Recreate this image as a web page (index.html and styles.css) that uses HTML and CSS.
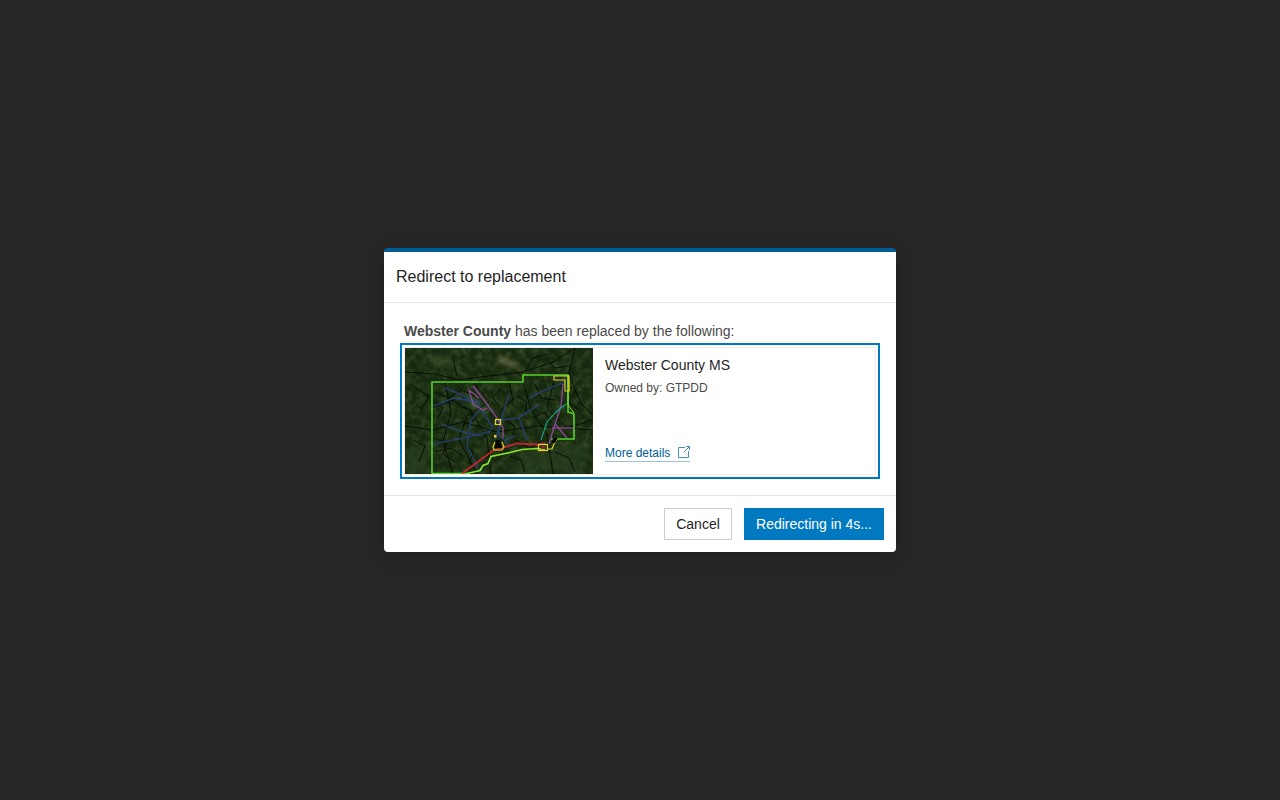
FILE: index.html
```html
<!DOCTYPE html>
<html lang="en">
<head>
  <meta charset="UTF-8">
  <title>Redirect to replacement</title>
  <link rel="stylesheet" href="styles.css">
</head>
<body>
<div class="modal">
  <div class="modal-header">Redirect to replacement</div>

  <div class="modal-body">
    <p class="replaced-text"><strong>Webster County</strong> has been replaced by the following:</p>
    <div class="item-outline">
      <div class="item-card">
        <svg class="item-thumb" viewBox="0 0 188 126" width="188" height="126" role="img" aria-label="Webster County MS map">
          <defs>
            <filter id="terrain" x="0" y="0" width="100%" height="100%" color-interpolation-filters="sRGB">
              <feTurbulence type="fractalNoise" baseFrequency="0.14" numOctaves="4" seed="7"/>
              <feColorMatrix values="0 0 0 0 0.24  0 0 0 0 0.32  0 0 0 0 0.17  1.6 0 0 0 -0.62"/>
            </filter>
            <filter id="soften" x="-5%" y="-5%" width="110%" height="110%" color-interpolation-filters="sRGB">
              <feGaussianBlur stdDeviation="0.4"/>
            </filter>
            <filter id="blur-patch" x="-30%" y="-30%" width="160%" height="160%" color-interpolation-filters="sRGB">
              <feGaussianBlur stdDeviation="2.5"/>
            </filter>
          </defs>
          <rect width="188" height="126" fill="#17290f"/>
          <rect width="188" height="126" filter="url(#terrain)"/>
          <g filter="url(#blur-patch)">
            <path d="M95 8l14 6 12 9-16-5-14-4z" fill="#7a7a52" opacity=".7"/>
            <path d="M20 8l24 2 10 8-26-2z" fill="#4a5c32" opacity=".6"/>
            <path d="M60 42l16 14 8 14-20-14z" fill="#3f6a3c" opacity=".7"/>
            <path d="M0 100l22-4v30H0z" fill="#2a3f20" opacity=".7"/>
            <path d="M120 100l60-6v30h-70z" fill="#2a3f20" opacity=".6"/>
          </g>

          <g filter="url(#soften)">
            <!-- county roads -->
            <g fill="none" stroke="#060a05" stroke-width=".9">
              <path d="M0 24l30 2 24 6 30-4 34-4 30-10 22-14"/>
              <path d="M26 60l22-8 20 14 14 24 4 36"/>
              <path d="M118 34l8 28 16 24 6 40"/>
              <path d="M0 78l28 4 30-8 34 10 40-6 56 4"/>
              <path d="M40 34l6 30-8 30 10 32"/>
              <path d="M150 30l-8 30 20 20 26-8"/>
              <path d="M170 0l-6 26 12 30 12 10"/>
              <path d="M68 34l16 20-22 14-8 24 18 34"/>
              <path d="M30 44l14 6 12-8 14 6M104 34l4 18-12 10M130 36l6 14 14 2M30 104l16-4 12 8M110 92l14 8 12-6"/>
              <path d="M52 28l-4-18M120 24l8-14 14-4"/>
              <path d="M28 52l10 8-6 12M56 58l10 4 2 12M96 40l-8 10 6 8M112 48l10 6-2 12M128 70l12-6 6 10"/>
              <path d="M30 90l12 6-4 10 12 8M60 96l8 8-4 12M100 72l10 6-2 10M104 108l12 4 4 12M150 104l14 6 6 14"/>
              <path d="M172 40l-8 14 10 8M10 40l14 8-8 14M8 92l12 6-6 16M140 10l10 10 14-2"/>
            </g>

            <!-- streams -->
            <g fill="none" stroke="#2a4488" stroke-width="1.500" opacity=".72">
              <path d="M29 58l20-8 22 4 16 24"/>
              <path d="M52 50l24 4"/>
              <path d="M74 62l-8 10-4 26 12 24"/>
              <path d="M28 96l30-6 26-6 8-12"/>
              <path d="M104 46l-6 20-8 26"/>
              <path d="M135 56l-22 14-16 2-4 14 12 12"/>
              <path d="M36 76l22 8 18 4"/>
              <path d="M160 34l-20 8-16 8"/>
              <path d="M114 70l8 22"/>
              <path d="M40 40l24 10"/>
              <path d="M100 92l10-4"/>
            </g>

            <!-- county boundary -->
            <path d="M62 125.500H27V34h91v-7h45v37l6 2v25h-24" fill="none" stroke="#55cf2a" stroke-width="1.600"/>
            <path d="M62 125.500l13-3 3-5 5-2 3-7 19-4 12-3 15-1 8 1" fill="none" stroke="#86e62e" stroke-width="1.700"/>
            <path d="M163 27v30l6 8" fill="none" stroke="#86e62e" stroke-width="1"/>

            <!-- pipeline routes -->
            <g fill="none" stroke="#8f4a96" stroke-width="1.300">
              <path d="M68 38l14 18 10 14 6 10v10"/>
              <path d="M74 50l-10-8 4 14 10 6 4-2"/>
              <path d="M158 36l-2 22-6 18-6 20"/>
              <path d="M147 80h22"/>
              <path d="M150 76l12 14"/>
            </g>
            <path d="M136 92l6-18 9-10 10-8" fill="none" stroke="#12a886" stroke-width="1.100"/>
            <path d="M57 125.500l15-11 16-12 24-7 20 1 8-1" fill="none" stroke="#c0272e" stroke-width="1.800"/>

            <!-- towns -->
            <g fill="none" stroke="#e6d22a" stroke-width="1.200">
              <path d="M149 28h15v15h-4v-11h-11z"/>
              <rect x="90.500" y="71.500" width="5" height="5"/>
              <path d="M90 94l-2 5 1 3h8l2-3-2-5"/>
              <rect x="133.500" y="96.500" width="9" height="6"/>
              <path d="M143 101h4l2-5 4-6"/>
            </g>
            <path d="M91 92h4l2 8h-7z" fill="#050505"/>
            <path d="M148 90h5l-3 5h-3z" fill="#050505"/>
            <rect x="136" y="98" width="4" height="3" fill="#8a1f2a"/>
            <rect x="89" y="87" width="2.500" height="2.500" fill="#e6d22a"/>
          </g>
        </svg>

        <div class="item-info">
          <div class="item-title">Webster County MS</div>
          <div class="item-owner">Owned by: GTPDD</div>
          <a class="item-link" href="#">
            More details
            <svg class="link-icon" viewBox="0 0 12 12" width="12" height="12" aria-hidden="true">
              <path d="M7 1.500H.5v10h10V5M6 6l5.500-5.500M8 .5h3.500V4" fill="none" stroke="#4d8fb8" stroke-width="1"/>
            </svg>
          </a>
        </div>
      </div>
    </div>
  </div>

  <div class="modal-footer">
    <button class="btn btn-cancel">Cancel</button>
    <button class="btn btn-primary">Redirecting in 4s...</button>
  </div>
</div>
</body>
</html>
```

FILE: styles.css
```css
* {
  box-sizing: border-box;
  margin: 0;
  padding: 0;
}

body {
  font-family: "Liberation Sans", Arial, sans-serif;
  background: #262626;
  color: #1f1f1f;
  height: 800px;
  display: flex;
  align-items: center;
  justify-content: center;
  overflow: hidden;
}

.modal {
  width: 512px;
  height: 304px;
  background: #fff;
  border-top: 4px solid #005e95;
  border-radius: 4px;
  box-shadow: 0 4px 16px rgba(0, 0, 0, 0.2);
  display: flex;
  flex-direction: column;
}

.modal-header {
  height: 51px;
  padding: 0 12px;
  display: flex;
  align-items: center;
  font-size: 16px;
  border-bottom: 1px solid #e8e8e8;
}

.modal-body {
  height: 193px;
  padding: 20px 16px 0;
}

.replaced-text {
  font-size: 14px;
  line-height: 16px;
  padding-left: 4px;
  margin-bottom: 4px;
  color: #4a4a4a;
}

.item-outline {
  border: 2px solid #0079c1;
  padding: 2px;
  height: 136px;
}

.item-card {
  display: flex;
  height: 128px;
  border: 1px solid #eeeeee;
}

.item-thumb {
  display: block;
  flex-shrink: 0;
}

.item-info {
  flex: 1;
  padding: 9px 12px 12px;
  display: flex;
  flex-direction: column;
  align-items: flex-start;
}

.item-title {
  font-size: 14px;
  line-height: 16px;
  margin-bottom: 8px;
}

.item-owner {
  font-size: 12px;
  line-height: 14px;
  color: #4a4a4a;
}

.item-link {
  margin-top: auto;
  font-size: 12px;
  line-height: 14px;
  color: #005e95;
  text-decoration: none;
  display: flex;
  align-items: flex-start;
  gap: 8px;
  height: 17px;
  padding-top: 1px;
  border-bottom: 1px solid #9cc3da;
}

.link-icon {
  margin-top: 0;
}

.modal-footer {
  flex: 1;
  border-top: 1px solid #e8e8e8;
  padding: 12px;
  display: flex;
  justify-content: flex-end;
  gap: 12px;
}

.btn {
  height: 32px;
  font-family: inherit;
  font-size: 14px;
  cursor: pointer;
}

.btn-cancel {
  width: 68px;
  background: #fff;
  color: #1f1f1f;
  border: 1px solid #cccccc;
}

.btn-primary {
  width: 140px;
  background: #0079c1;
  color: #fff;
  border: 1px solid #0079c1;
}
```
